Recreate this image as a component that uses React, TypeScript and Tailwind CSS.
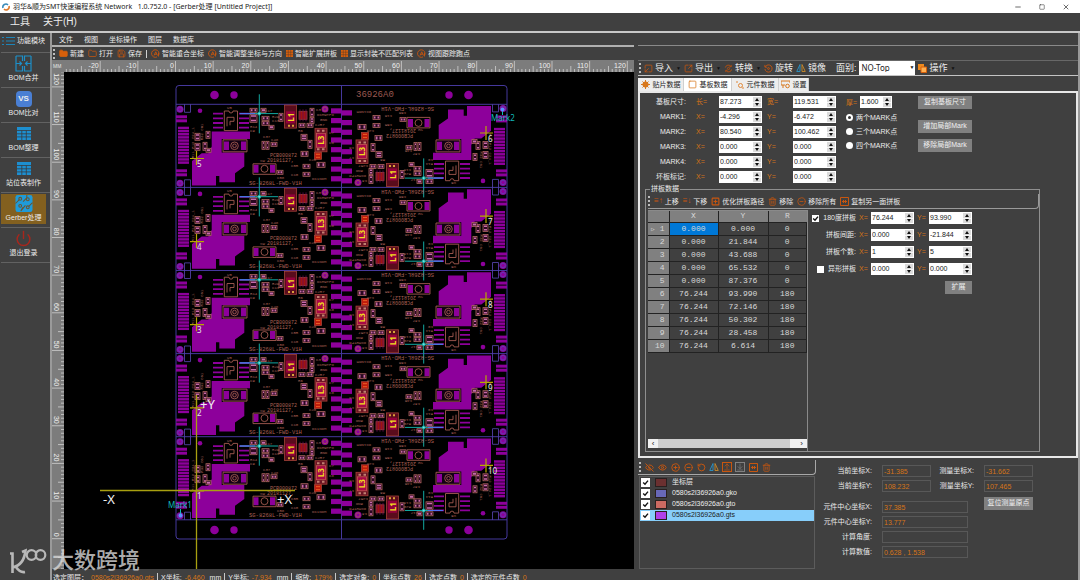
import { useState } from "react";
import {
  ArrowDownToLine,
  ArrowUpFromLine,
  CircleMinus,
  CirclePlus,
  Eye,
  EyeOff,
  Folder,
  FolderPlus,
  Minus,
  Power,
  RotateCcw,
  Save,
  Square,
  SquareArrowOutUpRight,
  SquarePlus,
  Trash2,
  X,
} from "lucide-react";

const menus = ["文件", "视图", "坐标操作", "图层", "数据库"];

const layers = [
  { name: "坐标层", color: "#6b3030" },
  { name: "0580s2l36926a0.gko", color: "#6868b8" },
  { name: "0580s2l36926a0.gto", color: "#cc6a62" },
  { name: "0580s2l36926a0.gts", color: "#b040e8" },
];

const panelRows = [
  ["0.000", "0.000", "0"],
  ["0.000", "21.844", "0"],
  ["0.000", "43.688", "0"],
  ["0.000", "65.532", "0"],
  ["0.000", "87.376", "0"],
  ["76.244", "93.990", "180"],
  ["76.244", "72.146", "180"],
  ["76.244", "50.302", "180"],
  ["76.244", "28.458", "180"],
  ["76.244", "6.614", "180"],
];

const boardFields = [
  { label: "基板尺寸:", a: "长=", b: "宽=", x: "87.273", y: "119.531" },
  { label: "MARK1:", a: "X=", b: "Y=", x: "-4.296", y: "-6.472" },
  { label: "MARK2:", a: "X=", b: "Y=", x: "80.540", y: "100.462" },
  { label: "MARK3:", a: "X=", b: "Y=", x: "0.000", y: "0.000" },
  { label: "MARK4:", a: "X=", b: "Y=", x: "0.000", y: "0.000" },
  { label: "坏板标记:", a: "X=", b: "Y=", x: "0.000", y: "0.000" },
];

const status = [
  { label: "选定图层：", value: "0580s2l36926a0.gts" },
  { label: "X坐标:", value: "-6.460", unit: "mm" },
  { label: "Y坐标:", value: "-7.934", unit: "mm" },
  { label: "缩放:", value: "179%" },
  { label: "选定对象:", value: "0" },
  { label: "坐标点数", value: "26" },
  { label: "选定点数", value: "0" },
  { label: "选定的元件点数", value: "0" },
];

/* ---------- icons ---------- */

const AiIcon = () => (
  <svg width="9" height="9" viewBox="0 0 18 18" fill="none" stroke="#c8560f" strokeWidth="1.8">
    <path d="M15.5 12A7.5 7.5 0 1 0 12 15.8" />
    <path d="M6 13 9.5 5.5 13 13M7.5 10.5h4M15 8v7" />
  </svg>
);

const GridIcon = () => (
  <svg width="7" height="7" viewBox="0 0 7 7">
    <path d="M0 0h7v7H0z" fill="#d8600c" />
    <path d="M0 2.2h7M0 4.700h7M2.300 0v7M4.700 0v7" stroke="#5a3a28" strokeWidth=".5" />
  </svg>
);

const MirrorIcon = ({ className = "h-3 w-3" }: { className?: string }) => (
  <svg viewBox="0 0 20 20" className={className} fill="none" strokeWidth="1.8">
    <path d="M8 3v14H1.500z" stroke="#2a94c8" />
    <path d="M12 3v14h6.500z" stroke="#c98a2c" />
  </svg>
);

const SwapIcon = () => (
  <svg viewBox="0 0 20 20" className="h-[9px] w-[9px]" fill="none" stroke="#b5500f" strokeWidth="2">
    <path d="M3 8a7 7 0 0 1 13-2M17 12a7 7 0 0 1-13 2M16 2v4h-4M4 18v-4h4" />
    <circle cx="10" cy="10" r="2.400" />
  </svg>
);

const RotateIcon = () => (
  <svg viewBox="0 0 20 20" className="h-[9px] w-[9px]" fill="none" stroke="#c8560f" strokeWidth="2">
    <path d="M3 6a8 8 0 1 1-1 5M2 2v5h5" />
    <circle cx="10" cy="10" r="2" />
  </svg>
);

const FramedBars = () => (
  <svg width="9" height="9" viewBox="0 0 9 9" fill="none" stroke="#c8560f">
    <path d="M.5.500h8v8h-8zM3.500 3v3M5.500 3v3M2 4.500h5" />
  </svg>
);

const TableIcon = () => (
  <svg viewBox="0 0 14 13" className="h-[13px] w-[14px]">
    <path d="M0 0h14v13H0z" fill="#1d8fd0" />
    <path d="M0 3.500h14M0 6.800h14M0 9.900h14M4.800 3.500V13M9.300 3.500V13" stroke="#383c40" strokeWidth=".8" />
  </svg>
);

const MergeIcon = () => (
  <svg viewBox="0 0 17 17" className="h-[17px] w-[17px]" fill="none" stroke="#1d8fc8" strokeWidth="1.200">
    <path d="M1 1h6.500v5M1 1v15h6.500v-5M16 1H9.500v5M16 1v15H9.500v-5" />
    <path d="M1 8.500h5.500M10.500 8.500H16M4.500 6.500l2 2-2 2M12.500 6.500l-2 2 2 2" />
  </svg>
);

const GerberIcon = () => (
  <svg viewBox="0 0 18 18" className="h-[17px] w-[18px]">
    <rect width="18" height="18" rx="2.500" fill="#1f9bd8" />
    <g fill="none" stroke="#6b5530" strokeWidth="1.100">
      <path d="M0 9l4-4M5.500 17l5-6M12 0v3l-4 4M18 8l-4 4M8 13l-2 3" />
      <circle cx="5" cy="4" r="1.500" />
      <circle cx="13" cy="4.500" r="1.500" />
      <circle cx="5" cy="11.500" r="1.500" />
      <circle cx="13" cy="13" r="1.500" />
    </g>
  </svg>
);

/* ---------- canvas drawing ---------- */

// pcb parts as [x, y, width, height] inside one module
const parts: number[][] = [
  [19, 29, 5, 7], [19, 39, 5, 7], [30, 27, 4, 7], [27, 38, 4, 8], [30, 44, 5, 4],
  [74, 4, 7, 4], [74, 10, 7, 8], [85, 4, 5, 4], [86, 12, 7, 4], [86, 17, 7, 4],
  [93, 21, 5, 4], [86, 37, 3, 8], [90, 37, 3, 8], [95, 38, 6, 4], [103, 9, 4, 8],
  [134, 4, 4, 8], [134, 13, 4, 6], [123, 19, 6, 4], [131, 19, 6, 4], [125, 30, 6, 6],
  [132, 36, 4, 8], [125, 47, 7, 5], [127, 60, 7, 4], [127, 68, 7, 4], [141, 58, 8, 5],
  [101, 66, 6, 4],
];

const tags: [number, number, string][] = [
  [51, 5, "U5"], [89, 8, "C17"], [96, 14, "R29"], [96, 18, "C13"], [74, 24, "R14"], [74, 28, "C9"],
  [87, 34, "C37"], [95, 37, "C48"], [140, 7, "C3"], [141, 12, "DCMWTPO"], [144, 17, "GND"],
  [139, 22, "C2R7"], [84, 58, "SW"], [101, 75, "C58"], [115, 63, "C5R"], [115, 72, "C10"],
  [136, 76, "DC1NOM"], [122, 28, "R6"], [133, 57, "C20"], [153, 30, "C7"], [153, 40, "C8"],
];

const Module = ({ flip }: { flip?: boolean }) => {
  const turn = flip ? 90 : -90;
  return (
    <g>
      <g fill="#8d009b">
        {[11, 15, 65, 69].map((y) => (
          <rect key={y} x="0" y={y} width="11" height="3" />
        ))}
        {Array.from({ length: 12 }, (_, i) => (
          <rect key={i} x="2" y={22.4 + i * 3.15} width="11" height="2.500" />
        ))}
        {Array.from({ length: 8 }, (_, i) => (
          <rect key={i} x="155" y={4 + i * 9.7} width="10.500" height="5.200" />
        ))}
        <path d="M35.700 27.300H74V34.700H45.700V48.300H68.300V62.300L59 69V78H43.300V71.700H40V81.300H16V56.700L25.700 49H32.300L35.700 42.300Z" />
        {[8.5, 13.1, 17.8, 22.5].map((y) => (
          <path key={y} d={`M37 ${y}h10v1.800h-10zM63 ${y}h10v1.800h-10z`} />
        ))}
        <path d="M48 37.300h5v8.400h-5zM65 37.300h5v8.400h-5zM77.500 60.500h5v8h-5zM94 60.500h5v8h-5z" />
        <circle cx="4" cy="5" r="3.500" />
        <circle cx="4" cy="79" r="3.500" />
        <circle cx="24" cy="6.500" r="2.300" />
        <circle cx="149" cy="4.800" r="3.500" />
      </g>
      <g fill="none" stroke="#5c48b8" strokeWidth=".8">
        <path d="M8.500 0V8h6V0M8.500 83V75.500h6V83" />
        <circle cx="4" cy="5" r="2.300" />
        <circle cx="4" cy="79" r="2.300" />
      </g>
      <path d="M47 35.500h24v12H47z" fill="#120014" />
      <path d="M48 37.300h5v8.400h-5zM65 37.300h5v8.400h-5z" fill="#8d009b" />
      <g fill="none" stroke="#a45a50" strokeWidth=".9">
        <path d="M48.300 6.700H53a2 2 0 0 0 4 0h4.500v19.600H48.300zM51 22v-9h7v4h-4v4" />
        <path d="M47 35.500h24v12H47zM77 59.500h23v10.500H77z" />
        <circle cx="58.500" cy="41.500" r="3.800" />
        <circle cx="58.500" cy="41.500" r="1.800" />
        <circle cx="88.500" cy="64.500" r="3.500" />
        <circle cx="149" cy="4.800" r="2.200" />
      </g>
      {parts.map(([x, y, w, h]) => (
        <g key={`${x}-${y}`}>
          <rect x={x} y={y} width={w} height={h} fill="#2a0820" stroke="#b06660" strokeWidth=".8" />
          {w > h ? (
            <path d={`M${x + 1} ${y + 1}h1.500v${h - 2}h-1.500zM${x + w - 2.5} ${y + 1}h1.500v${h - 2}h-1.500z`} fill="#c86aa8" />
          ) : (
            <path d={`M${x + 1} ${y + 1}h${w - 2}v1.500h-${w - 2}zM${x + 1} ${y + h - 2.5}h${w - 2}v1.500h-${w - 2}z`} fill="#c86aa8" />
          )}
        </g>
      ))}
      <g stroke="#a34238" strokeWidth=".8">
        <rect x="108.500" y=".8" width="12" height="23" fill="#5a0c1c" />
        <rect x="110" y="7" width="9" height="12" fill="#94003c" stroke="none" />
        <path d="M112 20.500h2v2h-2zM116 20.500h2v2h-2z" fill="#d9a03a" stroke="none" />
        <rect x="123" y="7" width="8" height="8" fill="#a01410" />
        <path d="M124 5v12M127 5v12M130 5v12" stroke="#6a0a50" />
        <rect x="139" y="24" width="12" height="23.500" fill="#6c1424" />
        <rect x="140.500" y="29" width="9" height="14" fill="#a80848" stroke="#c25a50" />
        <path d="M141 25.500h2.500v2H141zM146 25.500h2.500v2H146zM141 44h2.500v2H141zM146 44h2.500v2H146z" fill="#c08070" stroke="none" />
        <rect x="138.500" y="48" width="7" height="7" fill="#c01c0c" />
        <path d="M140 50h4M140 53h4" stroke="#f07030" />
      </g>
      <g fill="#f0dc20" fontSize="8" fontWeight="bold" textAnchor="middle">
        <text transform={`translate(114.500 13) rotate(${turn})`} dy="3">L1</text>
        <text transform={`translate(145 36) rotate(${turn})`} dy="3">L3</text>
      </g>
      <g fill="#ac6056" className="font-['Liberation_Mono',monospace]">
        <g fontSize="4">
          {tags.map(([x, y, t]) => (
            <text key={t} x={x} y={y}>{t}</text>
          ))}
          <text transform="translate(18 54) rotate(-90)">R11 R12 C24_1</text>
          <text transform="translate(27 36) rotate(-90)">R32 C61</text>
        </g>
        <text x="94" y="53" fontSize="5">PCB000872</text>
        <text x="91" y="58" fontSize="5">20181127,</text>
        <text x="73" y="80.500" fontSize="5.500">SG-8268L-FWD-V1H</text>
      </g>
      <g stroke="#12a8a0" strokeWidth="1">
        <path d="M83.300-10V29M64 9.300h38" />
        <circle cx="83.300" cy="9.300" r="1.500" fill="#70e0e0" />
      </g>
      <path d="M64 9.300h15" stroke="#5070f0" />
    </g>
  );
};

const TOP = 104.3;
const PITCH = 83.1;

const BoardCanvas = () => (
  <svg viewBox="64 72 570 497" preserveAspectRatio="xMinYMin meet" className="h-full w-full bg-black font-['Noto_Sans','Liberation_Sans',sans-serif]">
    <g fill="none" stroke="#45389c" strokeWidth="1">
      <rect x="176" y="85.500" width="331" height="453.500" rx="3" />
      <path d="M341.500 85V539" />
      {[0, 1, 2, 3, 4, 5].map((i) => (
        <path key={i} d={`M176 ${TOP + i * PITCH}H507`} />
      ))}
    </g>
    <g fill="#8d009b">
      {[95, 530].map((y) => (
        <g key={y}>
          <circle cx="214.500" cy={y} r="4.300" />
          <circle cx="234" cy={y} r="3.700" />
          <circle cx="449" cy={y} r="3.700" />
          <circle cx="468.500" cy={y} r="4.300" />
        </g>
      ))}
    </g>
    {[0, 1, 2, 3, 4].map((i) => (
      <g key={i}>
        <g transform={`translate(176 ${TOP + i * PITCH})`}>
          <Module />
        </g>
        <g transform={`translate(507 ${TOP + (i + 1) * PITCH}) rotate(180)`}>
          <Module flip />
        </g>
      </g>
    ))}
    {[0, 1, 2, 3, 4].map((i) => (
      <g key={i} stroke="#b8a800" strokeWidth="1.200">
        <path d={`M196.500 ${151 + i * PITCH}v14M190 ${158.5 + i * PITCH}h14`} />
        <path d={`M486 ${126 + i * PITCH}v14M480 ${133 + i * PITCH}h13`} />
        <g fill="#e8e8e8" stroke="none" fontSize="8">
          <text x="197" y={167 + i * PITCH}>{5 - i}</text>
          <text x="488" y={142 + i * PITCH}>{6 + i}</text>
        </g>
      </g>
    ))}
    <text x="356" y="97" fontSize="9" fill="#9a5850" className="font-['Liberation_Mono',monospace]">36926A0</text>
    <path d="M100 490.500H295M196.500 395V569" stroke="#a8a010" strokeWidth="1.300" />
    <g fontSize="13" fill="#f0f0f0">
      <text x="103" y="504">-X</text>
      <text x="277" y="504">+X</text>
      <text x="200" y="409">+Y</text>
    </g>
    <g fontSize="8" fill="#10b8b8">
      <text x="168" y="508">Mark1</text>
      <text x="491" y="121">Mark2</text>
    </g>
    <path d="M180.500 509v6M502.500 109v6" stroke="#10b8b8" />
    <circle cx="180.500" cy="515.500" r="2" fill="#5a90ff" />
    <circle cx="502.500" cy="109.500" r="2" fill="#5a90ff" />
  </svg>
);

const HRuler = () => (
  <svg viewBox="52 60 582 12" preserveAspectRatio="xMinYMin meet" className="block w-full bg-[#7c7c7c] font-['Liberation_Sans',sans-serif]">
    <text x="53" y="68" fontSize="5" fill="#e6e6e6">MM</text>
    {Array.from({ length: 153 }, (_, i) => {
      const v = i - 29;
      const x = 175.5 + v * 3.765;
      const y = v % 10 === 0 ? 61 : v % 5 === 0 ? 66 : 69;
      return x < 64 || x > 634 ? null : <path key={v} d={`M${x} ${y}V72`} stroke="#d0d0d0" strokeWidth=".8" />;
    })}
    {Array.from({ length: 15 }, (_, i) => {
      const v = (i - 2) * 10;
      return (
        <text key={v} x={174 + v * 3.765} y="67.500" fontSize="7" fill="#f0f0f0" textAnchor="end">{v}</text>
      );
    })}
  </svg>
);

const VRuler = () => (
  <svg viewBox="52 72 12 497" preserveAspectRatio="xMinYMin slice" className="h-full w-full bg-[#7c7c7c] font-['Liberation_Sans',sans-serif]">
    {Array.from({ length: 133 }, (_, i) => {
      const v = i - 8;
      const x = v % 10 === 0 ? 52 : v % 5 === 0 ? 58 : 61;
      return <path key={v} d={`M${x} ${538.7 - v * 3.765}H64`} stroke="#d0d0d0" strokeWidth=".8" />;
    })}
    {Array.from({ length: 13 }, (_, i) => (
      <text key={i} transform={`translate(54 ${536.7 - i * 37.65}) rotate(90)`} fontSize="7" fill="#f0f0f0" textAnchor="end">
        {i * 10}
      </text>
    ))}
  </svg>
);

/* ---------- form pieces ---------- */

const Spin = ({ label, value, className = "w-[43px]" }: { label: string; value: string; className?: string }) => {
  const [text, setText] = useState(value);
  const step = (d: number) => {
    const decimals = text.split(".")[1]?.length ?? 0;
    setText((Number(text) + d).toFixed(decimals));
  };

  return (
    <div className={`flex h-3 bg-white ${className}`}>
      <input
        aria-label={label}
        value={text}
        onChange={(e) => setText(e.target.value)}
        className="h-[10px] w-0 flex-1 bg-white pl-px text-[7px] leading-none text-[#222] outline-none"
      />
      <div className="my-px mr-px flex w-2 flex-col bg-[#dcdcdc]">
        <button type="button" aria-label={`${label} 增加`} onClick={() => step(1)} className="flex flex-1 items-center justify-center border-b border-[#f6f6f6]">
          <svg width="4" height="3" viewBox="0 0 4 3"><path d="M0 3 2 0l2 3z" fill="#111" /></svg>
        </button>
        <button type="button" aria-label={`${label} 减少`} onClick={() => step(-1)} className="flex flex-1 items-center justify-center">
          <svg width="4" height="3" viewBox="0 0 4 3"><path d="M0 0l2 3 2-3z" fill="#111" /></svg>
        </button>
      </div>
    </div>
  );
};

const Axis = ({ children, className = "w-4" }: { children: string; className?: string }) => (
  <span className={`text-[7px] text-[#d57418] ${className}`}>{children}</span>
);

const GrayButton = ({ children, className = "" }: { children: string; className?: string }) => (
  <button type="button" className={`h-[13px] bg-[#808080] text-[7px] whitespace-nowrap text-[#f0f0f0] ${className}`}>
    {children}
  </button>
);

const Readout = ({ label, value, labelClass = "w-[52px]", className = "w-[49px]" }: { label: string; value: string; labelClass?: string; className?: string }) => (
  <label className="flex h-3 items-center gap-[10px]">
    <span className={`text-right whitespace-nowrap ${labelClass}`}>{label}</span>
    <input readOnly value={value} className={`h-3 border border-[#585858] bg-transparent pl-px text-[7px] leading-none text-[#d57418] outline-none ${className}`} />
  </label>
);

const Grip = () => <span className="h-[10px] border-l-2 border-dotted border-[#bdbdbd]" />;

const NavItem = ({ label, icon, active }: { label: string; icon: React.ReactNode; active?: boolean }) => (
  <li className="h-[35px] border-b border-[#626262] pt-px pr-1">
    <button type="button" className={`flex h-[30px] w-full flex-col items-center whitespace-nowrap ${active ? "bg-[#83601f]" : ""}`}>
      <span className="flex h-[19px] items-center">{icon}</span>
      <span className="text-[7px] leading-[10px]">{label}</span>
    </button>
  </li>
);

/* ---------- page areas ---------- */

const Sidebar = () => (
  <nav className="w-[52px] shrink-0 border-r-2 border-[#9a9a9a] pl-px">
    <div className="flex h-5 items-center gap-[2px] border-b border-[#626262] pb-[3px]">
      <svg viewBox="0 0 14 10" className="h-[10px] w-[14px]" stroke="#1d84b8" strokeWidth="1.200">
        <path d="M1 1.500h2M5 1.500h9M1 5h2M5 5h9M1 8.500h2M5 8.500h9" />
      </svg>
      <span className="text-[7px] whitespace-nowrap">功能模块</span>
    </div>
    <ul>
      <NavItem label="BOM合并" icon={<MergeIcon />} />
      <NavItem
        label="BOM比对"
        icon={<span className="flex h-4 w-4 items-center justify-center rounded-sm bg-[#4a7fd4] text-[8px] font-bold">VS</span>}
      />
      <NavItem label="BOM整理" icon={<TableIcon />} />
      <NavItem label="站位表制作" icon={<TableIcon />} />
      <NavItem label="Gerber处理" icon={<GerberIcon />} active />
      <NavItem label="退出登录" icon={<Power size={17} color="#a8261c" strokeWidth={2} />} />
    </ul>
  </nav>
);

const ToolButton = ({ icon, children, className = "" }: { icon: React.ReactNode; children: string; className?: string }) => (
  <button type="button" className={`flex items-center gap-[2px] whitespace-nowrap ${className}`}>
    {icon}
    <span>{children}</span>
  </button>
);

const Workspace = () => (
  <section className="flex min-w-0 flex-col">
    <div className="flex h-[14px] items-center gap-[11px] border-b-2 border-[#b0b0b0] pl-[7px] text-[7px] leading-none">
      {menus.map((m) => (
        <button key={m} type="button">{m}</button>
      ))}
    </div>
    <div className="flex h-[13px] items-center gap-1 pl-px text-[7px] leading-none">
      <Grip />
      <ToolButton icon={<FolderPlus size={9} fill="#d8600c" color="#d8600c" />}>新建</ToolButton>
      <ToolButton icon={<Folder size={9} color="#c8560f" />}>打开</ToolButton>
      <ToolButton icon={<Save size={9} color="#c8560f" />}>保存</ToolButton>
      <span className="h-2 w-px bg-[#d0d0d0]" />
      <ToolButton icon={<AiIcon />}>智能重合坐标</ToolButton>
      <ToolButton icon={<AiIcon />}>智能调整坐标与方向</ToolButton>
      <ToolButton icon={<GridIcon />}>智能扩展拼板</ToolButton>
      <ToolButton icon={<GridIcon />}>显示封装不匹配列表</ToolButton>
      <ToolButton icon={<AiIcon />}>视图跟踪跑点</ToolButton>
    </div>
    <HRuler />
    <div className="flex min-h-0 flex-1">
      <div className="w-3 shrink-0"><VRuler /></div>
      <div className="min-w-0 flex-1"><BoardCanvas /></div>
    </div>
    <footer className="flex h-[11px] shrink-0 gap-[3px] overflow-hidden pl-px pt-1 text-[7px] leading-[10px] whitespace-nowrap">
      {status.map((s) => (
        <div key={s.label} className="flex gap-[3px] border-r border-[#c8c8c8] pr-[3px] last:border-0">
          <span>{s.label}</span>
          <span className="text-[#d57418]">{s.value}</span>
          {s.unit && <span className="pl-[2px]">{s.unit}</span>}
        </div>
      ))}
    </footer>
  </section>
);

const Drop = () => <span className="text-[5px] text-[#111]">▼</span>;

const RightToolbar = () => (
  <div className="flex h-4 items-center gap-[3px] border-t border-b border-t-[#686868] border-b-[#c4c4c4] pl-px text-[9px] leading-none">
    <Grip />
    <ToolButton icon={<SquareArrowOutUpRight size={9} color="#c8560f" className="rotate-180" />}>导入</ToolButton>
    <Drop />
    <ToolButton icon={<SquareArrowOutUpRight size={9} color="#c8560f" />}>导出</ToolButton>
    <Drop />
    <ToolButton icon={<SwapIcon />}>转换</ToolButton>
    <Drop />
    <ToolButton icon={<RotateIcon />}>旋转</ToolButton>
    <ToolButton icon={<MirrorIcon className="h-[10px] w-[10px]" />}>镜像</ToolButton>
    <label htmlFor="side" className="pl-[7px] whitespace-nowrap">面别:</label>
    <div className="relative">
      <select id="side" className="h-[14px] w-14 appearance-none bg-white pl-[2px] font-['Noto_Sans',sans-serif] text-[8px] text-[#222]">
        <option>NO-Top</option>
      </select>
      <span className="pointer-events-none absolute right-px top-1 text-[5px] text-[#111]">▼</span>
    </div>
    <ToolButton
      icon={
        <svg width="9" height="9" viewBox="0 0 9 9">
          <path d="M0 0h6v6H0z" fill="#f08a1c" />
          <path d="M3 3h5.500v5.500H3z" fill="#ffb050" stroke="#d8600c" />
        </svg>
      }
    >
      操作
    </ToolButton>
    <Drop />
  </div>
);

const tabs = [
  { label: "贴片数据", width: "w-[46px]", icon: <svg width="9" height="9" viewBox="0 0 9 9"><path d="M4.500 0v9M0 4.500h9M1.500 1.500l6 6M7.500 1.500l-6 6" stroke="#d8781c" /><circle cx="4.500" cy="4.500" r="3" fill="#d8781c" /></svg> },
  { label: "基板数据", width: "w-12", icon: <Square size={9} color="#d8781c" /> },
  { label: "元件数据", width: "w-[47px]", icon: <svg width="8" height="8" viewBox="0 0 8 8" fill="none" stroke="#e08838"><circle cx="4.500" cy="4.500" r="2" /><path d="M0 1h2M6 7h2" /></svg> },
  { label: "设置", width: "w-[30px]", icon: <svg width="9" height="9" viewBox="0 0 9 9" fill="none" stroke="#d8781c"><path d="M0 1h9v2M0 1v4h4M2 5v3" /><circle cx="6.500" cy="6" r="1.800" /></svg> },
];

const BoardForm = () => (
  <div className="flex items-start pt-[3px]">
    <div className="flex shrink-0 flex-col gap-[3px] text-[7px]">
      {boardFields.map((f) => (
        <div key={f.label} className="flex h-3 items-center">
          <span className="w-[46px] text-right">{f.label}</span>
          <Axis className="ml-[10px] w-[23px]">{f.a}</Axis>
          <Spin label={`${f.label} ${f.a}`} value={f.x} />
          <Axis className="ml-[5px] w-[26px]">{f.b}</Axis>
          <Spin label={`${f.label} ${f.b}`} value={f.y} />
        </div>
      ))}
    </div>
    <div className="ml-[10px] flex w-[52px] shrink-0 flex-col gap-1 text-[7px] leading-none">
      <div className="flex h-3 items-center">
        <Axis className="w-[14px]">厚=</Axis>
        <Spin label="厚" value="1.600" className="w-8" />
      </div>
      {["两个MARK点", "三个MARK点", "四个MARK点"].map((t, i) => (
        <label key={t} className="flex h-[10px] items-center gap-[3px] whitespace-nowrap">
          <input type="radio" name="mark" defaultChecked={i === 0} className="h-[7px] w-[7px] appearance-none rounded-full bg-white checked:border-2 checked:border-white checked:bg-[#333]" />
          {t}
        </label>
      ))}
    </div>
    <div className="ml-5 flex flex-col gap-[6px]">
      <GrayButton className="mb-[5px] w-[54px]">复制基板尺寸</GrayButton>
      <GrayButton className="w-[54px]">增加局部Mark</GrayButton>
      <GrayButton className="w-[54px]">移除局部Mark</GrayButton>
    </div>
  </div>
);

const PanelTable = ({ selected, onSelect }: { selected: number; onSelect: (i: number) => void }) => (
  <div className="flex w-[160px] shrink-0 flex-col border-t border-r border-[#8a8a8a]">
    <table className="w-full table-fixed border-collapse text-center font-['Liberation_Mono',monospace] text-[8px] leading-none text-[#d8d8d8]">
      <colgroup>
        <col className="w-[21px]" />
        <col className="w-[49px]" />
        <col className="w-[50px]" />
        <col />
      </colgroup>
      <thead>
        <tr className="h-[11px] bg-[#808080]">
          <th className="border-r border-[#222]" />
          <th className="border-r border-[#222] font-normal">X</th>
          <th className="border-r border-[#222] font-normal">Y</th>
          <th className="font-normal">R</th>
        </tr>
      </thead>
      <tbody>
        {panelRows.map((row, i) => (
          <tr key={i} onClick={() => onSelect(i)} className="h-[13px]">
            <th className="border border-l-0 border-[#222] bg-[#808080] pr-1 text-right font-normal whitespace-nowrap">
              {selected === i && <span className="pr-[5px] text-[6px]">▷</span>}
              {i + 1}
            </th>
            {row.map((cell, c) => (
              <td key={c} className={`border border-[#222] ${selected === i && c === 0 ? "bg-[#0078d7]" : ""}`}>{cell}</td>
            ))}
          </tr>
        ))}
      </tbody>
    </table>
    <div className="mt-auto mb-[3px] flex h-[9px] justify-between bg-[#cdcdcd] text-[#222]">
      <button type="button" aria-label="向左" className="flex w-[10px] items-center justify-center bg-[#f0f0f0] text-[8px] leading-none">‹</button>
      <button type="button" aria-label="向右" className="flex w-[17px] items-center justify-end bg-[#f0f0f0] pr-1 text-[8px] leading-none">›</button>
    </div>
  </div>
);

const spreadFields = [
  { label: "180度拼板", x: "76.244", y: "93.990", box: true },
  { label: "拼板间距:", x: "0.000", y: "-21.844" },
  { label: "拼板个数:", x: "1", y: "5" },
  { label: "异形拼板", x: "0.000", y: "0.000", box: true },
];

const Check = ({ checked, label, onChange }: { checked: boolean; label: string; onChange: () => void }) => (
  <span className="relative flex h-[7px] w-[7px] shrink-0">
    <input type="checkbox" aria-label={label} checked={checked} onChange={onChange} className="h-full w-full appearance-none bg-white" />
    {checked && (
      <svg viewBox="0 0 7 7" className="pointer-events-none absolute inset-0"><path d="M1.200 3.500 3 5.200 6 1.600" fill="none" stroke="#111" strokeWidth="1.400" /></svg>
    )}
  </span>
);

const SpreadForm = () => {
  const [on, setOn] = useState([true, false, false, false]);
  return (
    <div className="flex flex-col gap-[5px] pt-[2px] pl-1 text-[7px]">
      {spreadFields.map((f, i) => (
        <div key={f.label} className="flex h-3 items-center">
          <span className="flex w-11 items-center justify-end gap-1 whitespace-nowrap">
            {f.box && <Check label={f.label} checked={on[i]} onChange={() => setOn(on.map((v, j) => (j === i ? !v : v)))} />}
            {f.label}
          </span>
          <Axis className="ml-[3px] w-3">X=</Axis>
          <Spin label={`${f.label} X`} value={f.x} />
          <Axis className="ml-[3px] w-3">Y=</Axis>
          <Spin label={`${f.label} Y`} value={f.y} />
        </div>
      ))}
      <GrayButton className="mt-px w-[27px] self-end">扩展</GrayButton>
    </div>
  );
};

const RightPanel = () => {
  const [tab, setTab] = useState(1);
  const [row, setRow] = useState(0);
  return (
    <section className="flex min-h-0 flex-1 flex-col">
      <div className="mt-[2px] flex h-[13px]">
        {tabs.map((t, i) => (
          <button
            key={t.label}
            type="button"
            onClick={() => setTab(i)}
            className={`flex items-center justify-center gap-[3px] border-r border-[#d0d0d0] text-[7px] leading-none whitespace-nowrap text-[#222] ${t.width} ${tab === i ? "bg-white" : "bg-[#ededed]"}`}
          >
            {t.icon}
            {t.label}
          </button>
        ))}
      </div>
      <div className="flex min-h-0 flex-1 flex-col border-2 border-[#e8e8e8] pb-1">
        <BoardForm />
        <fieldset className="mt-px mr-9 ml-[5px] flex min-h-0 min-w-0 flex-1 flex-col border border-[#8f8f8f] pl-[2px]">
          <legend className="ml-[2px] px-px text-[7px] leading-[10px]">拼板数据</legend>
          <div className="flex h-[15px] shrink-0 items-center gap-1 rounded-br border-r border-b border-[#9a9a9a] text-[7px] leading-none">
            <Grip />
            <ToolButton icon={<span className="text-[8px] text-[#c8560f]">≡↑</span>}>上移</ToolButton>
            <ToolButton icon={<span className="text-[8px] text-[#c8560f]">≡↓</span>}>下移</ToolButton>
            <ToolButton icon={<SquarePlus size={9} color="#c8560f" strokeWidth={3} />}>优化拼板路径</ToolButton>
            <ToolButton icon={<Trash2 size={9} color="#c8560f" />}>移除</ToolButton>
            <ToolButton icon={<CircleMinus size={9} color="#c8560f" />}>移除所有</ToolButton>
            <ToolButton icon={<FramedBars />}>复制另一面拼板</ToolButton>
          </div>
          <div className="flex min-h-0 flex-1 pt-px">
            <PanelTable selected={row} onSelect={setRow} />
            <SpreadForm />
          </div>
        </fieldset>
      </div>
    </section>
  );
};

const LayerPanel = () => {
  const [shown, setShown] = useState([true, true, true, true]);
  const icons = [EyeOff, Eye, CirclePlus, CircleMinus, RotateCcw];
  const names = ["隐藏", "显示", "放大", "缩小", "复位"];
  return (
    <div className="flex w-[178px] shrink-0 flex-col">
      <div className="flex h-[15px] items-center gap-[3px] rounded-br border-r border-b border-[#a8a8a8] pl-px">
        <Grip />
        {icons.map((Icon, i) => (
          <button key={names[i]} type="button" aria-label={names[i]} className="flex w-[10px] justify-center">
            <Icon size={9} color="#c8560f" strokeWidth={2.5} />
          </button>
        ))}
        <button type="button" aria-label="镜像"><MirrorIcon className="h-[10px] w-[10px]" /></button>
        <button type="button" aria-label="上移" className="border border-[#c8560f]"><ArrowUpFromLine size={8} color="#c8560f" /></button>
        <button type="button" aria-label="下移" className="border border-[#808080]"><ArrowDownToLine size={8} color="#808080" /></button>
        <button type="button" aria-label="合并" className="flex w-[10px] justify-center"><FramedBars /></button>
        <button type="button" aria-label="删除" className="flex w-[10px] justify-center"><Trash2 size={9} color="#c8560f" /></button>
      </div>
      <ul className="mt-px mr-px ml-px h-[93px] border border-[#5c5c5c]">
        {layers.map((l, i) => (
          <li key={l.name} className={`flex h-[11px] items-center gap-[5px] pl-px text-[7px] ${i === 3 ? "bg-[#87cefa] text-[#222]" : ""}`}>
            <span className="flex h-[9px] w-[9px] items-center justify-center bg-white">
              <Check label={l.name} checked={shown[i]} onChange={() => setShown(shown.map((v, j) => (j === i ? !v : v)))} />
            </span>
            <span className="h-[9px] w-3 border border-[#2a2020]" style={{ backgroundColor: l.color }} />
            <span>{l.name}</span>
          </li>
        ))}
      </ul>
    </div>
  );
};

const Readouts = () => (
  <div className="flex min-w-0 flex-col gap-[3px] pt-[5px] pl-1 text-[7px]">
    <div className="flex">
      <Readout label="当前坐标X:" value="-31.385" />
      <Readout label="测量坐标X:" value="-31.662" labelClass="w-[43px]" />
    </div>
    <div className="flex">
      <Readout label="当前坐标Y:" value="108.232" />
      <Readout label="测量坐标Y:" value="107.465" labelClass="w-[43px]" />
    </div>
    <div className="mt-[2px] flex">
      <div className="mt-1 flex flex-col gap-[3px]">
        <Readout label="元件中心坐标X:" value="37.385" className="w-[86px]" />
        <Readout label="元件中心坐标Y:" value="13.777" className="w-[86px]" />
        <Readout label="计算角度:" value="" className="w-[86px]" />
        <Readout label="计算数值:" value="0.628 , 1.538" className="w-[86px]" />
      </div>
      <GrayButton className="ml-4 w-[49px]">复位测量原点</GrayButton>
    </div>
  </div>
);

const Watermark = () => (
  <div className="pointer-events-none absolute bottom-[6px] left-[9px] flex items-center gap-[5px] text-[22px] leading-[26px] font-medium text-[#d6d6d6] opacity-80">
    <svg viewBox="0 0 38 26" className="h-[26px] w-[38px]" fill="none" stroke="currentColor" strokeWidth="2.600">
      <path d="M1 5.500h2.500V25M3.500 19.500Q15 17 16.500 2.500L13 4M7 19q4 6 9 5" />
      <circle cx="22.500" cy="7" r="4.800" strokeWidth="2.200" />
      <circle cx="31.500" cy="7" r="4.800" strokeWidth="2.200" />
    </svg>
    <span>大数跨境</span>
  </div>
);

export default function App() {
  return (
    <div className="relative flex h-screen flex-col overflow-hidden bg-[#404040] font-['Liberation_Sans','Noto_Sans_CJK_SC',sans-serif] text-[#ececec]">
      <header className="flex h-[13px] shrink-0 items-center bg-white pl-[2px] text-[#222]">
        <svg width="8" height="8" viewBox="0 0 8 8" fill="none" strokeWidth="1.600">
          <path d="M1 5a3 3 0 0 1 5-3" stroke="#3a8ab8" />
          <path d="M7 3a3 3 0 0 1-5 3" stroke="#e07828" />
        </svg>
        <h1 className="ml-[3px] font-['Noto_Sans','Noto_Sans_CJK_SC',sans-serif] text-[7px] leading-none whitespace-pre">
          羽华&amp;顺为SMT快速编程系统 Network   1.0.752.0 - [Gerber处理 [Untitled Project]]
        </h1>
        <div className="ml-auto flex items-center gap-[17px] pr-[10px]">
          <button type="button" aria-label="最小化"><Minus size={8} /></button>
          <button type="button" aria-label="还原"><Square size={6} /></button>
          <button type="button" aria-label="关闭"><X size={8} /></button>
        </div>
      </header>
      <div className="flex h-5 shrink-0 items-center gap-[13px] border-b-2 border-[#c8c8c8] pl-[10px] text-[10px] leading-none">
        <button type="button">工具</button>
        <button type="button">关于(H)</button>
      </div>
      <div className="flex min-h-0 flex-1">
        <Sidebar />
        <main className="grid min-w-0 flex-1 grid-cols-[minmax(0,582fr)_minmax(0,446fr)]">
          <Workspace />
          <aside className="flex min-h-0 min-w-0 flex-col border-r-2 border-[#9a9a9a] pl-[4px]">
            <div className="h-[13px] shrink-0 border-b border-[#8a8a8a]" />
            <div className="h-[14px] shrink-0" />
            <RightToolbar />
            <RightPanel />
            <div className="flex h-[122px] shrink-0 pt-[2px]">
              <LayerPanel />
              <Readouts />
            </div>
          </aside>
        </main>
      </div>
      <Watermark />
    </div>
  );
}
